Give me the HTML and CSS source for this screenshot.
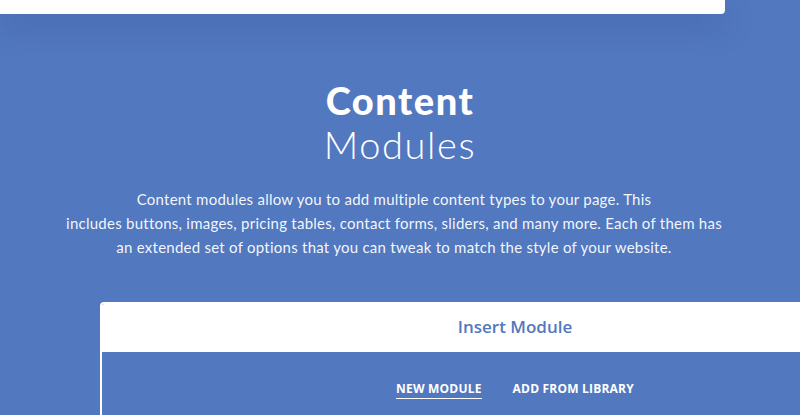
FILE: index.html
```html
<!DOCTYPE html>
<html lang="en">
<head>
    <meta charset="UTF-8">
    <meta name="viewport" content="width=device-width, initial-scale=1.0">
    <title>Content Modules</title>
    <link rel="stylesheet" href="styles.css">
</head>
<body>
    <div class="top-card"></div>

    <section class="intro">
        <h2 class="intro-title">
            <strong>Content</strong>
            <span>Modules</span>
        </h2>
        <p class="intro-text">
            Content modules allow you to add multiple content types to your page. This<br>
            includes buttons, images, pricing tables, contact forms, sliders, and many more. Each of them has<br>
            an extended set of options that you can tweak to match the style of your website.
        </p>
    </section>

    <div class="modal">
        <div class="modal-header">Insert Module</div>
        <div class="modal-body">
            <nav class="modal-tabs">
                <a class="tab active" href="#">New Module</a>
                <a class="tab" href="#">Add From Library</a>
            </nav>
        </div>
    </div>
</body>
</html>
```

FILE: styles.css
```css
html, body {
    height: 100%;
}
body {
    margin: 0;
    padding: 0;
    background: #5278c0;
    color: white;
    font-family: Lato, "Open Sans", sans-serif;
    overflow: hidden;
}
.top-card {
    width: 725px;
    height: 14px;
    background: white;
    border-radius: 0 0 4px 0;
    box-shadow: 0 12px 30px rgba(30, 50, 110, 0.25);
}
.intro {
    text-align: center;
    padding-top: 66px;
}
.intro-title {
    margin: 0;
    font-size: 38px;
    line-height: 40px;
}
.intro-title strong {
    display: block;
    font-weight: 900;
    letter-spacing: 1.5px;
}
.intro-title span {
    display: block;
    margin-top: 4px;
    font-weight: 300;
    letter-spacing: 1.6px;
}
.intro-text {
    margin: 23px 0 0;
    padding-right: 12px;
    font-size: 15px;
    line-height: 24px;
    letter-spacing: 0.25px;
    color: rgba(255, 255, 255, 0.95);
}
.modal {
    margin: 43px 0 0 100px;
    width: 826px;
    background: #5278c0;
    border: 2px solid white;
    border-bottom: none;
    border-radius: 4px 4px 0 0;
    overflow: hidden;
}
.modal-header {
    height: 48px;
    background: white;
    color: #5278c0;
    font-family: "Open Sans", sans-serif;
    font-weight: 600;
    font-size: 17px;
    line-height: 46px;
    text-align: center;
}
.modal-body {
    height: 80px;
    padding-top: 28px;
}
.modal-tabs {
    display: flex;
    justify-content: center;
    gap: 31px;
}
.tab {
    color: white;
    font-family: "Open Sans", sans-serif;
    font-weight: 700;
    font-size: 12px;
    letter-spacing: 0.2px;
    text-transform: uppercase;
    text-decoration: none;
    padding-bottom: 1px;
}
.tab.active {
    border-bottom: 1px solid white;
}
```
